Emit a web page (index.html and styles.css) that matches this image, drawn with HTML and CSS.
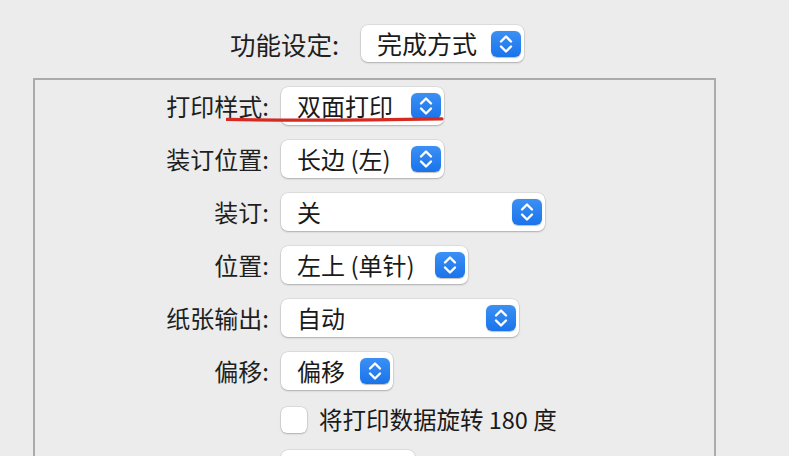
FILE: index.html
```html
<!DOCTYPE html>
<html lang="zh-CN">
<head>
<meta charset="utf-8">
<link rel="stylesheet" href="styles.css">
</head>
<body>
<div class="page">
  <div class="top-row">
    <span class="top-label">功能设定:</span>
    <div class="popup w-top">
      <span class="value top-value">完成方式</span>
      <span class="stepper"><svg viewBox="0 0 30 26" width="30" height="26"><path d="M10 10.5 L15 5.5 L20 10.5 M10 15.5 L15 20.5 L20 15.5"/></svg></span>
    </div>
  </div>

  <div class="panel">
    <div class="form">
      <span class="label">打印样式:</span>
      <div class="popup w1"><span class="value">双面打印</span><span class="stepper"><svg viewBox="0 0 30 26" width="30" height="26"><path d="M10 10.5 L15 5.5 L20 10.5 M10 15.5 L15 20.5 L20 15.5"/></svg></span></div>

      <span class="label">装订位置:</span>
      <div class="popup w1"><span class="value">长边 (左)</span><span class="stepper"><svg viewBox="0 0 30 26" width="30" height="26"><path d="M10 10.5 L15 5.5 L20 10.5 M10 15.5 L15 20.5 L20 15.5"/></svg></span></div>

      <span class="label">装订:</span>
      <div class="popup w3"><span class="value">关</span><span class="stepper"><svg viewBox="0 0 30 26" width="30" height="26"><path d="M10 10.5 L15 5.5 L20 10.5 M10 15.5 L15 20.5 L20 15.5"/></svg></span></div>

      <span class="label">位置:</span>
      <div class="popup w4"><span class="value">左上 (单针)</span><span class="stepper"><svg viewBox="0 0 30 26" width="30" height="26"><path d="M10 10.5 L15 5.5 L20 10.5 M10 15.5 L15 20.5 L20 15.5"/></svg></span></div>

      <span class="label">纸张输出:</span>
      <div class="popup w5"><span class="value">自动</span><span class="stepper"><svg viewBox="0 0 30 26" width="30" height="26"><path d="M10 10.5 L15 5.5 L20 10.5 M10 15.5 L15 20.5 L20 15.5"/></svg></span></div>

      <span class="label">偏移:</span>
      <div class="popup w6"><span class="value">偏移</span><span class="stepper"><svg viewBox="0 0 30 26" width="30" height="26"><path d="M10 10.5 L15 5.5 L20 10.5 M10 15.5 L15 20.5 L20 15.5"/></svg></span></div>

      <span class="label"></span>
      <label class="check-row"><span class="checkbox"></span><span class="check-text">将打印数据旋转 180 度</span></label>

      <span class="label"></span>
      <div class="popup w8"><span class="value"></span><span class="stepper light"></span></div>
    </div>
    <svg class="underline" viewBox="0 0 220 8" width="220" height="8"><path d="M1 4.4 C 60 5.6, 150 5, 216 3.8"/></svg>
  </div>
</div>
</body>
</html>
```

FILE: styles.css
```css
* { box-sizing: border-box; }
html, body {
  margin: 0;
  padding: 0;
  background: #ececec;
  overflow: hidden;
}
body {
  width: 789px;
  height: 456px;
  font-family: "Noto Sans CJK SC", "Noto Sans", sans-serif;
  font-weight: 400;
  color: #1f1f1f;
}
.page {
  padding-top: 25px;
}
.top-row {
  display: flex;
  align-items: center;
  height: 37px;
}
.top-label {
  width: 339px;
  text-align: right;
  font-size: 25.5px;
  margin-right: 22px;
  line-height: 1;
}
.popup {
  display: flex;
  align-items: center;
  justify-content: space-between;
  height: 38px;
  background: #fff;
  border-radius: 7px;
  box-shadow: 0 0 0 0.5px rgba(0,0,0,0.12), 0 1px 2px rgba(0,0,0,0.22);
  padding: 0 3px 0 16px;
}
.top-row .popup { height: 37px; }
.value {
  font-size: 24px;
  line-height: 1;
  color: #1a1a1a;
  white-space: nowrap;
}
.top-value { font-size: 25px; }
.stepper {
  display: flex;
  width: 30px;
  height: 26px;
  border-radius: 6px;
  background: linear-gradient(#3b90f5, #1a74ea);
  box-shadow: 0 0.5px 1px rgba(0,0,0,0.25);
}
.stepper.light {
  background: linear-gradient(#eaf7fb, #dff2f8);
  box-shadow: none;
}
.stepper svg path {
  fill: none;
  stroke: #fff;
  stroke-width: 2.4;
  stroke-linecap: round;
  stroke-linejoin: round;
}
.w-top { width: 163px; }
.w1 { width: 163px; }
.w3 { width: 264px; }
.w4 { width: 187px; }
.w5 { width: 238px; }
.w6 { width: 112px; }
.w8 { width: 134px; }

.panel {
  position: relative;
  margin: 16px 0 0 33px;
  width: 683px;
  height: 400px;
  border: 2px solid #ababab;
  border-bottom: none;
  padding-top: 7px;
}
.form {
  display: grid;
  grid-template-columns: 234px auto;
  column-gap: 12px;
  row-gap: 15px;
  justify-items: start;
  align-items: center;
}
.label {
  justify-self: end;
  font-size: 24px;
  line-height: 1;
  color: #1f1f1f;
  white-space: nowrap;
}
.check-row {
  display: flex;
  align-items: center;
  height: 30px;
  gap: 12px;
}
.checkbox {
  width: 26px;
  height: 26px;
  background: #fff;
  border-radius: 6px;
  box-shadow: 0 0 0 0.5px rgba(0,0,0,0.15), 0 1px 2px rgba(0,0,0,0.2);
}
.check-text {
  font-size: 23.5px;
  line-height: 1;
  color: #1a1a1a;
}
.underline {
  position: absolute;
  left: 191px;
  top: 35px;
}
.underline path {
  fill: none;
  stroke: #d42a22;
  stroke-width: 3.2;
  stroke-linecap: round;
}
```
